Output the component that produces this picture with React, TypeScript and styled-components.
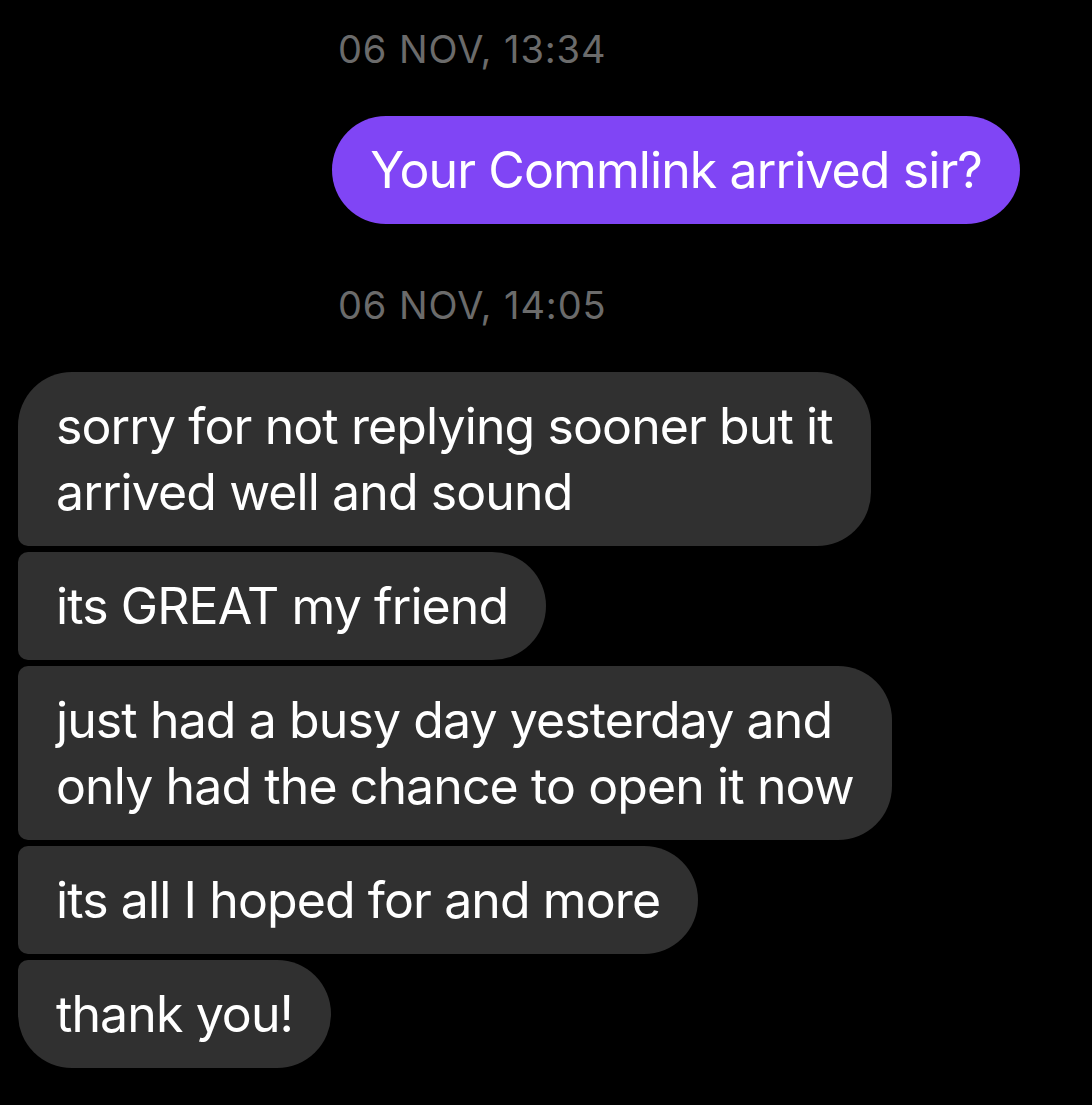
import React from "react";
import styled, { createGlobalStyle, css } from "styled-components";

type Side = "in" | "out";
type Pos = "single" | "first" | "middle" | "last";

interface Message {
  id: string;
  lines: string[];
}

interface Section {
  id: string;
  time: string;
  side: Side;
  messages: Message[];
}

const sections: Section[] = [
  {
    id: "s1",
    time: "06 NOV, 13:34",
    side: "out",
    messages: [{ id: "m1", lines: ["Your Commlink arrived sir?"] }],
  },
  {
    id: "s2",
    time: "06 NOV, 14:05",
    side: "in",
    messages: [
      { id: "m2", lines: ["sorry for not replying sooner but it", "arrived well and sound"] },
      { id: "m3", lines: ["its GREAT my friend"] },
      { id: "m4", lines: ["just had a busy day yesterday and", "only had the chance to open it now"] },
      { id: "m5", lines: ["its all I hoped for and more"] },
      { id: "m6", lines: ["thank you!"] },
    ],
  },
];

const positionOf = (index: number, count: number): Pos => {
  if (count === 1) return "single";
  if (index === 0) return "first";
  if (index === count - 1) return "last";
  return "middle";
};

const Thread = () => {
  return (
    <Page>
      {sections.map((section) => (
        <Block key={section.id}>
          <TimeStamp>{section.time}</TimeStamp>
          <Group $side={section.side}>
            {section.messages.map((msg, i) => (
              <Bubble
                key={msg.id}
                $side={section.side}
                $pos={positionOf(i, section.messages.length)}
              >
                {msg.lines.map((line, j) => (
                  <React.Fragment key={j}>
                    {j > 0 && <br />}
                    {line}
                  </React.Fragment>
                ))}
              </Bubble>
            ))}
          </Group>
        </Block>
      ))}
    </Page>
  );
};

export default function App() {
  return (
    <>
      <GlobalStyle />
      <Thread />
    </>
  );
}

const GlobalStyle = createGlobalStyle`
  html, body {
    margin: 0;
    padding: 0;
    background: #000;
  }
  body {
    font-family: Inter, "Liberation Sans", sans-serif;
    -webkit-font-smoothing: antialiased;
  }
`;

const Page = styled.main`
  width: 1092px;
  min-height: 1105px;
  box-sizing: border-box;
  padding: 27px 72px 0 18px;
  display: flex;
  flex-direction: column;
  gap: 59px;
  background: #000;
`;

const Block = styled.section`
  display: flex;
  flex-direction: column;
`;

const TimeStamp = styled.div`
  padding-left: 320px;
  margin-bottom: 45px;
  font-size: 38px;
  line-height: 44px;
  color: #6b6b6b;
  letter-spacing: 0.9px;
`;

const Group = styled.div<{ $side: Side }>`
  display: flex;
  flex-direction: column;
  gap: 6px;
  align-items: ${(p) => (p.$side === "out" ? "flex-end" : "flex-start")};
`;

const BIG = 54;
const SMALL = 10;

const radiusFor = (side: Side, pos: Pos) => {
  const top = pos === "single" || pos === "first" ? BIG : SMALL;
  const bottom = pos === "single" || pos === "last" ? BIG : SMALL;
  if (side === "in") {
    return css`
      border-radius: ${top}px ${BIG}px ${BIG}px ${bottom}px;
    `;
  }
  return css`
    border-radius: ${BIG}px ${top}px ${bottom}px ${BIG}px;
  `;
};

const Bubble = styled.div<{ $side: Side; $pos: Pos }>`
  box-sizing: border-box;
  padding: 21px 38px;
  font-size: 50px;
  line-height: 66px;
  letter-spacing: -0.9px;
  color: #fff;
  white-space: nowrap;
  background: ${(p) => (p.$side === "out" ? "#8045f5" : "#303030")};
  ${(p) => radiusFor(p.$side, p.$pos)}
`;
